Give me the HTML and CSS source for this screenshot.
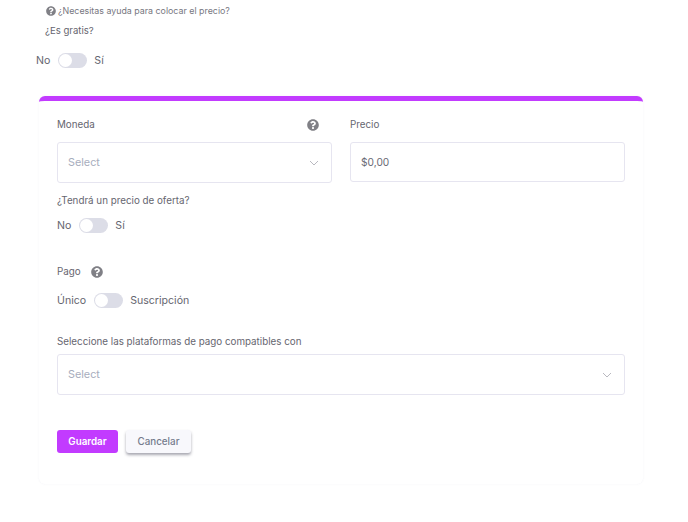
FILE: index.html
```html
<!DOCTYPE html>
<html lang="es">
<head>
<meta charset="utf-8">
<title>Precio</title>
<link rel="stylesheet" href="styles.css">
</head>
<body>
<div class="page">
  <div class="help-line">
    <svg class="icon icon-sm" viewBox="0 0 512 512"><path d="M504 256c0 137-111 248-248 248S8 393 8 256 119 8 256 8s248 111 248 248zM262.700 90c-54.500 0-89.300 23-116.500 63.800-3.500 5.300-2.400 12.400 2.700 16.300l34.700 26.300c5.200 3.900 12.600 3 16.700-2.100 17.900-22.700 30.100-35.800 57.300-35.800 20.400 0 45.700 13.100 45.700 32.900 0 15-12.400 22.700-32.500 34C247.100 238.500 216 254.900 216 296v4c0 6.600 5.400 12 12 12h56c6.600 0 12-5.400 12-12v-1.300c0-28.500 83.200-29.700 83.200-106.700 0-58-60.200-102-116.500-102zM256 338c-25.400 0-46 20.600-46 46 0 25.400 20.600 46 46 46s46-20.600 46-46c0-25.400-20.600-46-46-46z"/></svg>
    <span>¿Necesitas ayuda para colocar el precio?</span>
  </div>
  <div class="free-label">¿Es gratis?</div>
  <div class="switch-row free-switch">
    <span>No</span><span class="switch"><span class="knob"></span></span><span>Sí</span>
  </div>

  <section class="card">
    <div class="columns">
      <div class="field">
        <div class="label-row">
          <label>Moneda</label>
          <svg class="icon icon-md" viewBox="0 0 512 512"><path d="M504 256c0 137-111 248-248 248S8 393 8 256 119 8 256 8s248 111 248 248zM262.700 90c-54.500 0-89.300 23-116.500 63.800-3.500 5.300-2.400 12.400 2.700 16.300l34.700 26.300c5.200 3.900 12.600 3 16.700-2.100 17.900-22.700 30.100-35.800 57.300-35.800 20.400 0 45.700 13.100 45.700 32.900 0 15-12.400 22.700-32.500 34C247.100 238.500 216 254.900 216 296v4c0 6.600 5.400 12 12 12h56c6.600 0 12-5.400 12-12v-1.300c0-28.500 83.200-29.700 83.200-106.700 0-58-60.200-102-116.500-102zM256 338c-25.400 0-46 20.600-46 46 0 25.400 20.600 46 46 46s46-20.600 46-46c0-25.400-20.600-46-46-46z"/></svg>
        </div>
        <div class="control select">
          <span>Select</span>
          <svg class="chevron" viewBox="0 0 10 6"><path d="M1 1l4 4 4-4"/></svg>
        </div>
      </div>
      <div class="field">
        <div class="label-row"><label>Precio</label></div>
        <div class="control price">$0,00</div>
      </div>
    </div>

    <div class="offer-label">¿Tendrá un precio de oferta?</div>
    <div class="switch-row offer-switch">
      <span>No</span><span class="switch"><span class="knob"></span></span><span>Sí</span>
    </div>

    <div class="pay-label">
      <label>Pago</label>
      <svg class="icon icon-md" viewBox="0 0 512 512"><path d="M504 256c0 137-111 248-248 248S8 393 8 256 119 8 256 8s248 111 248 248zM262.700 90c-54.500 0-89.300 23-116.500 63.800-3.500 5.300-2.400 12.400 2.700 16.300l34.700 26.300c5.200 3.900 12.600 3 16.700-2.100 17.900-22.700 30.100-35.800 57.300-35.800 20.400 0 45.700 13.100 45.700 32.900 0 15-12.400 22.700-32.500 34C247.100 238.500 216 254.900 216 296v4c0 6.600 5.400 12 12 12h56c6.600 0 12-5.400 12-12v-1.300c0-28.500 83.200-29.700 83.200-106.700 0-58-60.200-102-116.500-102zM256 338c-25.400 0-46 20.600-46 46 0 25.400 20.600 46 46 46s46-20.600 46-46c0-25.400-20.600-46-46-46z"/></svg>
    </div>
    <div class="switch-row pay-switch">
      <span>Único</span><span class="switch"><span class="knob"></span></span><span>Suscripción</span>
    </div>

    <div class="platform-label">Seleccione las plataformas de pago compatibles con</div>
    <div class="control select">
      <span>Select</span>
      <svg class="chevron" viewBox="0 0 10 6"><path d="M1 1l4 4 4-4"/></svg>
    </div>

    <div class="actions">
      <button class="btn btn-primary" type="button">Guardar</button>
      <button class="btn btn-secondary" type="button">Cancelar</button>
    </div>
  </section>
</div>
</body>
</html>
```

FILE: styles.css
```css
* { box-sizing: border-box; }

html, body { margin: 0; padding: 0; background: #fff; }

body {
  font-family: "Inter", "Liberation Sans", sans-serif;
  color: #66666f;
  font-size: 9.8px;
  line-height: 14px;
}

.page {
  width: 688px;
  height: 522px;
  overflow: hidden;
  padding-top: 4px;
}

.icon { fill: #808086; display: block; flex: none; }
.icon-sm { width: 10px; height: 10px; }
.icon-md { width: 12px; height: 12px; }

.help-line {
  display: flex;
  align-items: center;
  gap: 2px;
  margin-left: 46px;
  font-size: 8.85px;
  color: #77777f;
}

.free-label { margin: 6px 0 0 45px; font-size: 9.6px; }

.switch-row {
  display: flex;
  align-items: center;
  font-size: 10.6px;
  gap: 7.5px;
}

.free-switch { margin: 15px 0 0 36px; }

.switch {
  width: 29px;
  height: 15px;
  border-radius: 8px;
  background: #dcdde7;
  display: flex;
  align-items: center;
  padding-left: 1px;
}

.knob {
  width: 13px;
  height: 13px;
  border-radius: 50%;
  background: #fff;
}

.card {
  width: 604px;
  height: 388px;
  margin: 28px 0 0 39px;
  padding: 17px 18px 0;
  border-top: 5px solid #c23bff;
  border-radius: 6px;
  background: #fff;
  box-shadow: 0 0 2px rgba(120, 120, 160, 0.1);
}

.columns {
  display: grid;
  grid-template-columns: 275px 275px;
  gap: 18px;
}

.label-row {
  display: flex;
  align-items: center;
  justify-content: space-between;
  padding-right: 13px;
  height: 14px;
}

.control {
  border: 1px solid #e6e5f0;
  border-radius: 3px;
  background: #fff;
  display: flex;
  align-items: center;
  justify-content: space-between;
  padding: 0 10px;
  height: 41px;
  font-size: 10.8px;
}

.field .control { margin-top: 10px; }
.field .price { height: 40px; color: #6b6b75; font-size: 10.2px; }

.select { color: #a7adbd; }

.chevron {
  width: 10px;
  height: 6px;
  fill: none;
  stroke: #b9b9c0;
  stroke-width: 1;
  margin-right: 2px;
}

.offer-label { margin-top: 11px; }

.offer-switch { margin-top: 10px; }

.pay-label {
  display: flex;
  align-items: center;
  gap: 10px;
  margin-top: 32px;
  height: 14px;
}

.pay-switch { margin-top: 14px; }

.platform-label { margin-top: 27px; }

.platform-label + .control { margin-top: 5px; }

.actions {
  display: flex;
  gap: 8px;
  margin-top: 35px;
}

.btn {
  height: 23px;
  border: 0;
  border-radius: 3px;
  font-family: inherit;
  font-size: 9.8px;
  padding: 0;
}

.btn-primary {
  width: 61px;
  background: #c23bff;
  color: #fff;
  font-weight: 600;
}

.btn-secondary {
  width: 65px;
  background: #f8f8fc;
  color: #757b8c;
  font-weight: 500;
  box-shadow: 0 2px 3px rgba(60, 60, 80, 0.45);
}
```
